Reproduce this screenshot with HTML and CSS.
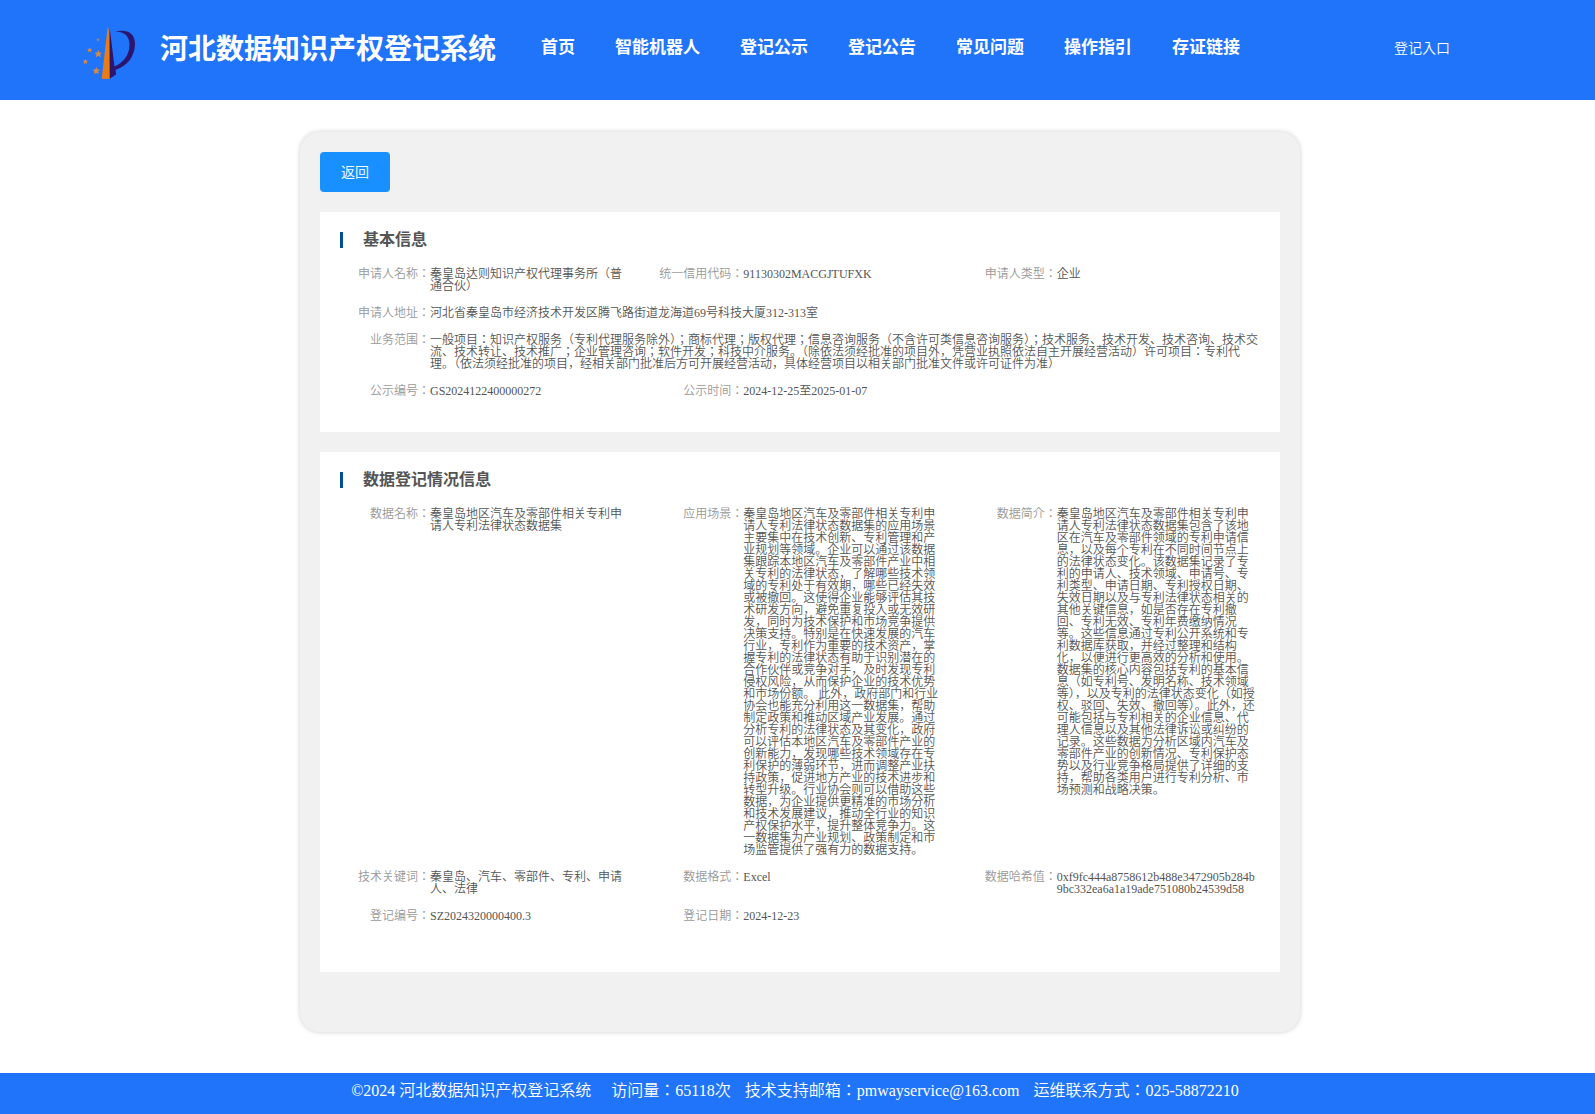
FILE: index.html
```html
<!DOCTYPE html>
<html lang="en">
<head>
<meta charset="utf-8">
<meta name="viewport" content="width=device-width, initial-scale=1">
<title>河北数据知识产权登记系统</title>
<link rel="stylesheet" href="styles.css">
</head>
<body>
<header class="header">
  <svg class="logo" viewBox="0 0 56 56" aria-hidden="true">
    <path fill="#e87d18" d="M24.700 1 L25.900 4 L26.200 53 L18.700 52.700 Z"/>
    <path fill="#2b156f" d="M26.700 2.300 L31.500 40.500 C40 37 46.500 29 46.500 19 C46.500 10 42 6 32 5.500 C44 3 52 7 52 18 C52 31 43 41 32.600 43.700 L33 48.500 L27 52.500 Z"/>
    <g fill="#d98a42">
      <path id="star" d="M15.300 24 L16.400 26.500 L19 26.700 L17.100 28.500 L17.800 31.200 L15.300 29.800 L12.800 31.200 L13.500 28.500 L11.600 26.700 L14.200 26.500 Z"/>
      <use href="#star" x="-2" y="17"/>
      <path d="M6.700 21.500 L7.500 23 L9.200 23.200 L8 24.400 L8.400 26.200 L6.700 25.200 L5 26.200 L5.400 24.400 L4.200 23.200 L5.900 23 Z"/>
      <path d="M2.400 33 L3.200 34.600 L5 34.800 L3.700 36.100 L4.100 38 L2.400 37 L0.700 38 L1.100 36.100 L0 34.800 L1.600 34.600 Z"/>
      <path opacity=".7" d="M15 11.500 L15.600 13 L16.700 13.100 L15.900 14 L16 15.200 L15 14.600 L14 15.200 L14.100 14 L13.300 13.100 L14.400 13 Z"/>
    </g>
  </svg>
  <h1 class="site-name">河北数据知识产权登记系统</h1>
  <nav class="nav">
    <a href="#">首页</a>
    <a href="#">智能机器人</a>
    <a href="#">登记公示</a>
    <a href="#">登记公告</a>
    <a href="#">常见问题</a>
    <a href="#">操作指引</a>
    <a href="#">存证链接</a>
  </nav>
  <a class="login" href="#">登记入口</a>
</header>

<main class="main">
  <div class="panel">
    <button class="back" type="button">返回</button>

    <section class="card">
      <h2 class="card-title">基本信息</h2>
      <dl class="fields">
        <div class="field"><dt>申请人名称：</dt><dd>秦皇岛达则知识产权代理事务所（普通合伙）</dd></div>
        <div class="field"><dt>统一信用代码：</dt><dd>91130302MACGJTUFXK</dd></div>
        <div class="field"><dt>申请人类型：</dt><dd>企业</dd></div>
        <div class="field field-wide"><dt>申请人地址：</dt><dd>河北省秦皇岛市经济技术开发区腾飞路街道龙海道69号科技大厦312-313室</dd></div>
        <div class="field field-wide"><dt>业务范围：</dt><dd>一般项目：知识产权服务（专利代理服务除外）；商标代理；版权代理；信息咨询服务（不含许可类信息咨询服务）；技术服务、技术开发、技术咨询、技术交流、技术转让、技术推广；企业管理咨询；软件开发；科技中介服务。（除依法须经批准的项目外，凭营业执照依法自主开展经营活动）许可项目：专利代理。（依法须经批准的项目，经相关部门批准后方可开展经营活动，具体经营项目以相关部门批准文件或许可证件为准）</dd></div>
        <div class="field"><dt>公示编号：</dt><dd>GS2024122400000272</dd></div>
        <div class="field"><dt>公示时间：</dt><dd>2024-12-25至2025-01-07</dd></div>
      </dl>
    </section>

    <section class="card card-last">
      <h2 class="card-title">数据登记情况信息</h2>
      <dl class="fields">
        <div class="field"><dt>数据名称：</dt><dd>秦皇岛地区汽车及零部件相关专利申请人专利法律状态数据集</dd></div>
        <div class="field"><dt>应用场景：</dt><dd>秦皇岛地区汽车及零部件相关专利申请人专利法律状态数据集的应用场景主要集中在技术创新、专利管理和产业规划等领域。企业可以通过该数据集跟踪本地区汽车及零部件产业中相关专利的法律状态，了解哪些技术领域的专利处于有效期，哪些已经失效或被撤回。这使得企业能够评估其技术研发方向，避免重复投入或无效研发，同时为技术保护和市场竞争提供决策支持。特别是在快速发展的汽车行业，专利作为重要的技术资产，掌握专利的法律状态有助于识别潜在的合作伙伴或竞争对手，及时发现专利侵权风险，从而保护企业的技术优势和市场份额。 此外，政府部门和行业协会也能充分利用这一数据集，帮助制定政策和推动区域产业发展。通过分析专利的法律状态及其变化，政府可以评估本地区汽车及零部件产业的创新能力，发现哪些技术领域存在专利保护的薄弱环节，进而调整产业扶持政策，促进地方产业的技术进步和转型升级。行业协会则可以借助这些数据，为企业提供更精准的市场分析和技术发展建议，推动全行业的知识产权保护水平，提升整体竞争力。这一数据集为产业规划、政策制定和市场监管提供了强有力的数据支持。</dd></div>
        <div class="field"><dt>数据简介：</dt><dd>秦皇岛地区汽车及零部件相关专利申请人专利法律状态数据集包含了该地区在汽车及零部件领域的专利申请信息，以及每个专利在不同时间节点上的法律状态变化。该数据集记录了专利的申请人、技术领域、申请号、专利类型、申请日期、专利授权日期、失效日期以及与专利法律状态相关的其他关键信息，如是否存在专利撤回、专利无效、专利年费缴纳情况等。这些信息通过专利公开系统和专利数据库获取，并经过整理和结构化，以便进行更高效的分析和使用。数据集的核心内容包括专利的基本信息（如专利号、发明名称、技术领域等），以及专利的法律状态变化（如授权、驳回、失效、撤回等）。此外，还可能包括与专利相关的企业信息、代理人信息以及其他法律诉讼或纠纷的记录。这些数据为分析区域内汽车及零部件产业的创新情况、专利保护态势以及行业竞争格局提供了详细的支持，帮助各类用户进行专利分析、市场预测和战略决策。</dd></div>
        <div class="field"><dt>技术关键词：</dt><dd>秦皇岛、汽车、零部件、专利、申请人、法律</dd></div>
        <div class="field"><dt>数据格式：</dt><dd>Excel</dd></div>
        <div class="field"><dt>数据哈希值：</dt><dd>0xf9fc444a8758612b488e3472905b284b9bc332ea6a1a19ade751080b24539d58</dd></div>
        <div class="field"><dt>登记编号：</dt><dd>SZ2024320000400.3</dd></div>
        <div class="field"><dt>登记日期：</dt><dd>2024-12-23</dd></div>
      </dl>
    </section>
  </div>
</main>

<footer class="footer">
  <span class="copyright">©2024 河北数据知识产权登记系统</span>
  <span>访问量：65118次</span>
  <span>技术支持邮箱：pmwayservice@163.com</span>
  <span>运维联系方式：025-58872210</span>
</footer>
</body>
</html>
```
FILE: styles.css
```css
* {
  box-sizing: border-box;
  margin: 0;
  padding: 0;
}

body {
  font-family: "Liberation Serif", "Noto Sans CJK JP", serif;
  font-size: 16px;
  font-weight: 350;
  color: #555;
  background: #fff;
}

a {
  color: inherit;
  text-decoration: none;
}

/* Top bar */
.header {
  display: flex;
  align-items: center;
  height: 100px;
  padding: 0 145px 0 83px;
  color: #fff;
  background: #2074f9;
}

.logo {
  flex: none;
  width: 56px;
  height: 56px;
  margin: 8px 21px 0 0;
}

.site-name {
  font-size: 28px;
  line-height: 40px;
  white-space: nowrap;
}

.nav {
  display: flex;
  gap: 40px;
  margin: 0 0 4px 45px;
  font-size: 17px;
  font-weight: bold;
  line-height: 24px;
  white-space: nowrap;
}

.login {
  margin: 0 0 2px auto;
  font-size: 14px;
  line-height: 20px;
  white-space: nowrap;
}

/* Content */
.main {
  padding: 32px 0 41px 5px;
}

.panel {
  max-width: 1000px;
  margin: 0 auto;
  padding: 20px 20px 60px;
  border-radius: 20px;
  background: #f1f1f1;
  box-shadow: 0 0 5px rgba(0, 0, 0, 0.2);
}

.back {
  display: block;
  width: 70px;
  height: 40px;
  padding-bottom: 2px;
  border: 0;
  border-radius: 4px;
  font-family: inherit;
  font-size: 14px;
  font-weight: inherit;
  color: #fff;
  background: #1890ff;
  cursor: pointer;
}

.card {
  margin-top: 20px;
  padding: 20px 0 20px 20px;
  background: #fff;
}

.card-last {
  padding-bottom: 35px;
}

.card-title {
  padding-left: 20px;
  border-left: 3px solid #005092;
  font-size: 16px;
  line-height: 16px;
}

.fields {
  display: grid;
  grid-template-columns: repeat(3, 1fr);
  row-gap: 15px;
  padding: 20px 0 15px;
  font-size: 12px;
  line-height: 12px;
}

.field {
  display: grid;
  grid-template-columns: 90px minmax(0, 1fr);
  padding-right: 20px;
}

.field-wide {
  grid-column: 1 / -1;
}

.field dt {
  text-align: right;
  color: #999;
}

.field dd {
  overflow-wrap: anywhere;
}

/* Bottom bar */
.footer {
  display: flex;
  justify-content: center;
  gap: 14px;
  padding: 6px 5px 11px 0;
  line-height: 24px;
  color: #fff;
  background: #2074f9;
}

.copyright {
  margin-right: 6px;
}
```
